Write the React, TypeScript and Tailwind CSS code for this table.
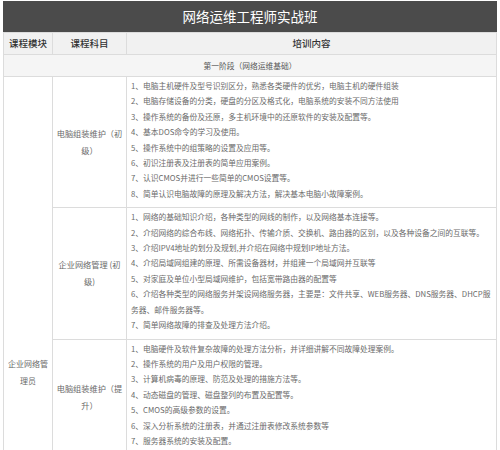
import React from 'react';

type Course = {
  name: string[];
  lines: string[];
};

const courses: Course[] = [
  {
    name: ['电脑组装维护（初', '级）'],
    lines: [
      '1、电脑主机硬件及型号识别区分，熟悉各类硬件的优劣，电脑主机的硬件组装',
      '2、电脑存储设备的分类，硬盘的分区及格式化，电脑系统的安装不同方法使用',
      '3、操作系统的备份及还原，多主机环境中的还原软件的安装及配置等。',
      '4、基本DOS命令的学习及使用。',
      '5、操作系统中的组策略的设置及应用等。',
      '6、初识注册表及注册表的简单应用案例。',
      '7、认识CMOS并进行一些简单的CMOS设置等。',
      '8、简单认识电脑故障的原理及解决方法，解决基本电脑小故障案例。',
    ],
  },
  {
    name: ['企业网络管理 (初', '级)'],
    lines: [
      '1、网络的基础知识介绍，各种类型的网线的制作，以及网络基本连接等。',
      '2、介绍网络的综合布线、网络拓扑、传输介质、交换机、路由器的区别，以及各种设备之间的互联等。',
      '3、介绍IPV4地址的划分及规划,并介绍在网络中规划IP地址方法。',
      '4、介绍局域网组建的原理、所需设备器材，并组建一个局域网并互联等',
      '5、对家庭及单位小型局域网维护，包括宽带路由器的配置等',
      '6、介绍各种类型的网络服务并架设网络服务器，主要是：文件共享、WEB服务器、DNS服务器、DHCP服',
      '务器、邮件服务器等。',
      '7、简单网络故障的排查及处理方法介绍。',
    ],
  },
  {
    name: ['电脑组装维护（提', '升）'],
    lines: [
      '1、电脑硬件及软件复杂故障的处理方法分析，并详细讲解不同故障处理案例。',
      '2、操作系统的用户及用户权限的管理。',
      '3、计算机病毒的原理、防范及处理的措施方法等。',
      '4、动态磁盘的管理、磁盘整列的布置及配置等。',
      '5、CMOS的高级参数的设置。',
      '6、深入分析系统的注册表，并通过注册表修改系统参数等',
      '7、服务器系统的安装及配置。',
    ],
  },
];

const font = { fontFamily: '"Noto Sans CJK SC", "Noto Sans", sans-serif' };
const cell = 'border border-[#dcdcdc]';

export default function App() {
  return (
    <div className="w-[500px] h-[450px] overflow-hidden bg-white px-[3px] pt-[1px]" style={font}>
      <div className="h-[31px] bg-[#4b4b4b] flex items-center justify-center text-[13.5px] text-white">
        网络运维工程师实战班
      </div>
      <table className="w-full border-collapse table-fixed text-[#6a6a6a]">
        <colgroup>
          <col className="w-[49px]" />
          <col className="w-[74px]" />
          <col />
        </colgroup>
        <thead>
          <tr className="h-[22px] bg-[#f1f1f1] text-[9.5px] text-[#333]">
            <th className={`${cell} font-medium`}>课程模块</th>
            <th className={`${cell} font-medium`}>课程科目</th>
            <th className={`${cell} font-medium`}>培训内容</th>
          </tr>
        </thead>
        <tbody>
          <tr className="h-[22px] bg-[#f5f5f5]">
            <td colSpan={3} className={`${cell} text-center text-[7.75px] text-[#555]`}>
              第一阶段（网络运维基础）
            </td>
          </tr>
          {courses.map((c, i) => (
            <tr key={c.name[0]}>
              {i === 0 && (
                <td rowSpan={4} className={`${cell} text-center align-middle text-[8px] leading-[17px] whitespace-nowrap`}>
                  <div>企业网络管</div>
                  <div>理员</div>
                </td>
              )}
              <td className={`${cell} text-center align-middle text-[8.2px] leading-[17px] whitespace-nowrap`}>
                {c.name.map((n) => (
                  <div key={n}>{n}</div>
                ))}
              </td>
              <td className={`${cell} pl-[4px] pt-[1px] pb-[6px] align-top text-[7.75px] leading-[15.4px] whitespace-nowrap overflow-hidden`}>
                {c.lines.map((l) => (
                  <div key={l}>{l}</div>
                ))}
              </td>
            </tr>
          ))}
          <tr className="h-[212px]">
            <td className={cell}></td>
            <td className={cell}></td>
          </tr>
        </tbody>
      </table>
    </div>
  );
}
